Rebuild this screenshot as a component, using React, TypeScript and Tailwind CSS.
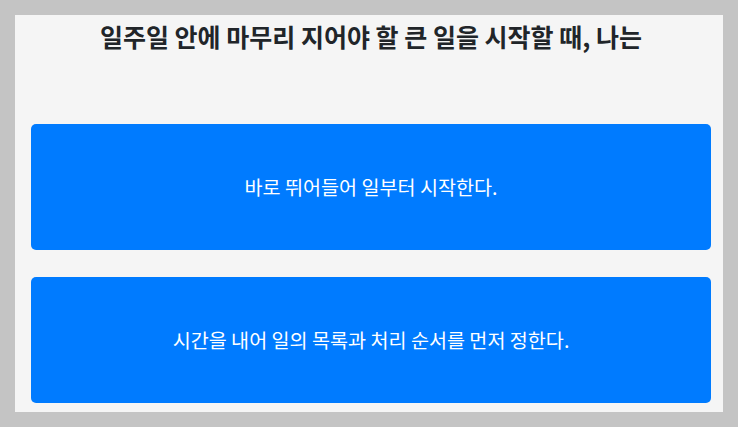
const options = [
  "바로 뛰어들어 일부터 시작한다.",
  "시간을 내어 일의 목록과 처리 순서를 먼저 정한다.",
];

export default function App() {
  return (
    <div
      className="h-[427px] w-[738px] bg-[#c4c4c4] p-[15px]"
      style={{ fontFamily: '"Noto Sans CJK KR", "Noto Sans", sans-serif' }}
    >
      <div className="flex h-[397px] w-[708px] flex-col bg-[#f5f5f5] pt-[4px] pl-[16px] pr-[12px]">
        <h1 className="text-center text-[25px] leading-[34px] font-bold text-[#212529]">
          일주일 안에 마무리 지어야 할 큰 일을 시작할 때, 나는
        </h1>
        <div className="mt-[71px] flex flex-col gap-[27px]">
          {options.map((label) => (
            <button
              key={label}
              type="button"
              className="flex h-[126px] w-full items-center justify-center rounded-[5px] bg-[#007bff] text-[19.6px] text-white"
            >
              {label}
            </button>
          ))}
        </div>
      </div>
    </div>
  );
}
